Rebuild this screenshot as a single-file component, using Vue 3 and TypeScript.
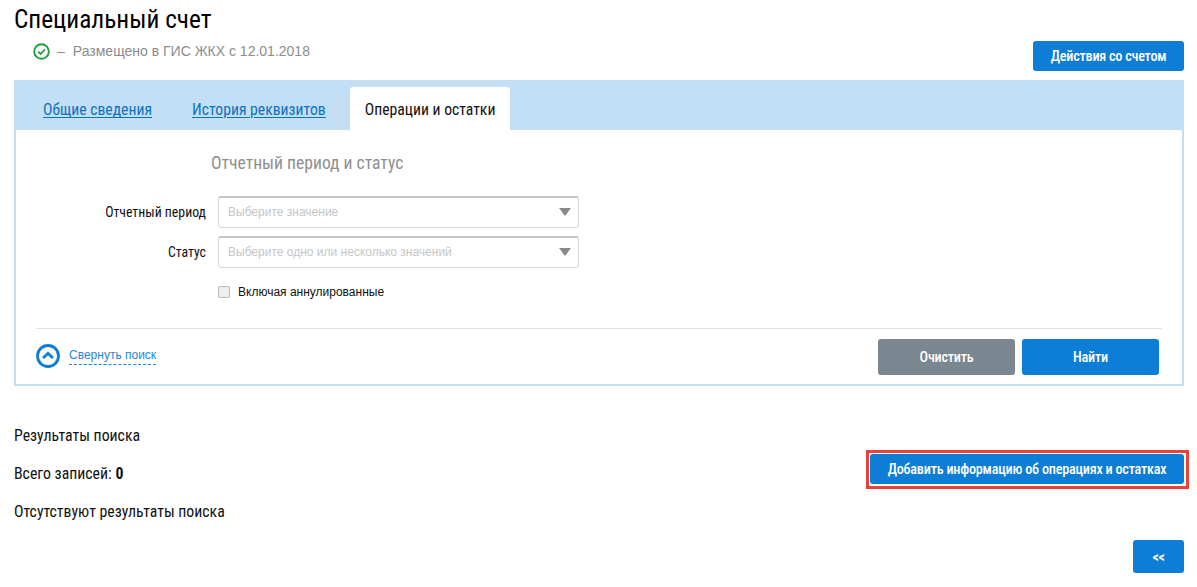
<script setup lang="ts">
const fields = [
  { label: 'Отчетный период', placeholder: 'Выберите значение' },
  { label: 'Статус', placeholder: 'Выберите одно или несколько значений' },
]
const tabs = [
  { label: 'Общие сведения', active: false },
  { label: 'История реквизитов', active: false },
  { label: 'Операции и остатки', active: true },
]
</script>

<template>
  <div class="page">
    <div class="top">
      <div>
        <h1 class="title">Специальный счет</h1>
        <div class="status">
          <svg width="17" height="17" viewBox="0 0 17 17" fill="none">
            <circle cx="8.5" cy="8.5" r="7.3" stroke="#1f9d3c" stroke-width="1.9" />
            <path d="M5.2 8.6l2.4 2.4L12 6.4" stroke="#1f9d3c" stroke-width="1.8" />
          </svg>
          <span class="dash">–</span>
          <span>Размещено в ГИС ЖКХ с 12.01.2018</span>
        </div>
      </div>
      <button class="btn btn-actions">Действия со счетом</button>
    </div>

    <section class="panel">
      <nav class="tabs">
        <a v-for="t in tabs" :key="t.label" class="tab" :class="{ active: t.active }">{{ t.label }}</a>
      </nav>
      <div class="body">
        <h2 class="section">Отчетный период и статус</h2>
        <div class="fields">
          <div v-for="f in fields" :key="f.label" class="row">
            <label class="lbl">{{ f.label }}</label>
            <div class="select">
              <span>{{ f.placeholder }}</span>
              <i class="arrow"></i>
            </div>
          </div>
        </div>
        <label class="check"><i class="box"></i>Включая аннулированные</label>
        <div class="foot">
          <div class="collapse">
            <svg width="24" height="24" viewBox="0 0 24 24" fill="none">
              <circle cx="12" cy="12" r="10.5" stroke="#0e7dd6" stroke-width="2.8" />
              <path d="M7 14l5-4.5 5 4.5" stroke="#0e7dd6" stroke-width="2.8" />
            </svg>
            <a class="collapse-link">Свернуть поиск</a>
          </div>
          <div class="actions">
            <button class="btn btn-gray">Очистить</button>
            <button class="btn btn-find">Найти</button>
          </div>
        </div>
      </div>
    </section>

    <section class="results">
      <div class="res-left">
        <p>Результаты поиска</p>
        <p>Всего записей: <b>0</b></p>
        <p>Отсутствуют результаты поиска</p>
      </div>
      <div class="highlight"><button class="btn btn-add">Добавить информацию об операциях и остатках</button></div>
    </section>

    <div class="back"><button class="btn btn-back">&lt;&lt;</button></div>
  </div>
</template>

<style>
html, body { margin: 0; background: #fff; }
</style>

<style scoped>
.page {
  box-sizing: border-box;
  width: 1197px;
  height: 587px;
  padding: 0 13px 0 14px;
  font-family: "Roboto Condensed", "Liberation Sans Narrow", Roboto, sans-serif;
  font-stretch: condensed;
  font-size: 15.8px;
  color: #111;
  overflow: hidden;
}
.top { display: flex; justify-content: space-between; align-items: flex-end; height: 80px; }
.title { margin: 0; font-size: 25.3px; font-weight: 400; line-height: 28px; color: #000; }
.status {
  display: flex; align-items: center; margin: 7px 0 19px 19px; height: 20px;
  font-family: "Liberation Sans", Arial, sans-serif; font-stretch: normal; font-size: 14px; color: #8c8c8c;
}
.dash { margin: 0 8px 0 7px; }
.btn {
  border: 0; border-radius: 3px; background: #0e7dd6; color: #fff;
  font: inherit; font-weight: 500; font-size: 14.2px; letter-spacing: -0.23px; padding: 0; display: block;
}
.btn-actions { width: 151px; height: 30px; margin-bottom: 9px; }
.panel { height: 306px; box-sizing: border-box; border: 2px solid #c2dff6; border-top: 0; }
.tabs { display: flex; height: 50px; background: #c2dff6; align-items: flex-end; margin: 0 -2px; padding-left: 9px; }
.tab {
  height: 43px; line-height: 46px; padding: 0 20px; font-size: 15.7px; white-space: nowrap;
  color: #0e72c0; text-decoration: underline; text-underline-offset: 2px;
}
.tab.active { background: #fff; color: #111; text-decoration: none; border-radius: 3px 3px 0 0; padding: 0 15px; margin-left: 4px; }
.body { padding: 0 20px; }
.section { margin: 0; padding: 21px 0 0 175px; font-size: 17.6px; line-height: 24px; font-weight: 400; color: #8f8f8f; }
.fields { margin-top: 21px; display: flex; flex-direction: column; gap: 8px; }
.row { display: flex; align-items: center; }
.lbl { width: 170px; text-align: right; font-size: 13.8px; margin-right: 12px; }
.select {
  box-sizing: border-box; width: 361px; height: 32px; border: 1px solid #dcdcdc; border-top: 2px solid #c4c4c4;
  border-radius: 3px; display: flex; align-items: center; justify-content: space-between;
  padding: 0 7px 1px 9px; font-family: "Liberation Sans", Arial, sans-serif; font-stretch: normal; font-size: 12px; color: #c6c6c6;
}
.arrow { width: 0; height: 0; border-left: 6px solid transparent; border-right: 6px solid transparent; border-top: 8px solid #8a8a8a; }
.check { display: flex; align-items: center; margin: 16px 0 0 182px; font-family: "Liberation Sans", Arial, sans-serif; font-stretch: normal; font-size: 12px; height: 16px; }
.box { width: 10px; height: 10px; border: 1px solid #bbb; border-radius: 2px; background: #eee; margin-right: 8px; }
.foot { display: flex; justify-content: space-between; border-top: 1px solid #e2e2e2; margin-top: 28px; height: 46px; align-items: flex-end; padding-right: 3px; }
.collapse { display: flex; align-items: center; gap: 9px; margin-bottom: 7px; }
.collapse-link { color: #1f86dc; font-size: 12px; line-height: 16px; font-family: "Liberation Sans", Arial, sans-serif; font-stretch: normal; border-bottom: 1px dashed #1f86dc; padding-bottom: 1px; }
.actions { display: flex; gap: 7px; }
.btn-gray { width: 137px; height: 36px; background: #7a8791; }
.btn-find { width: 137px; height: 36px; }
.results { display: flex; justify-content: space-between; align-items: flex-start; margin-top: 40px; }
.res-left p { margin: 0 0 19px; line-height: 19px; }
.highlight { margin: 24px -5px 0 0; border: 3px solid #e8423c; padding: 1px 2px 2px 1px; }
.btn-add { width: 314px; height: 30px; }
.back { display: flex; justify-content: flex-end; }
.btn-back { width: 51px; height: 33px; font-weight: 700; }
</style>
